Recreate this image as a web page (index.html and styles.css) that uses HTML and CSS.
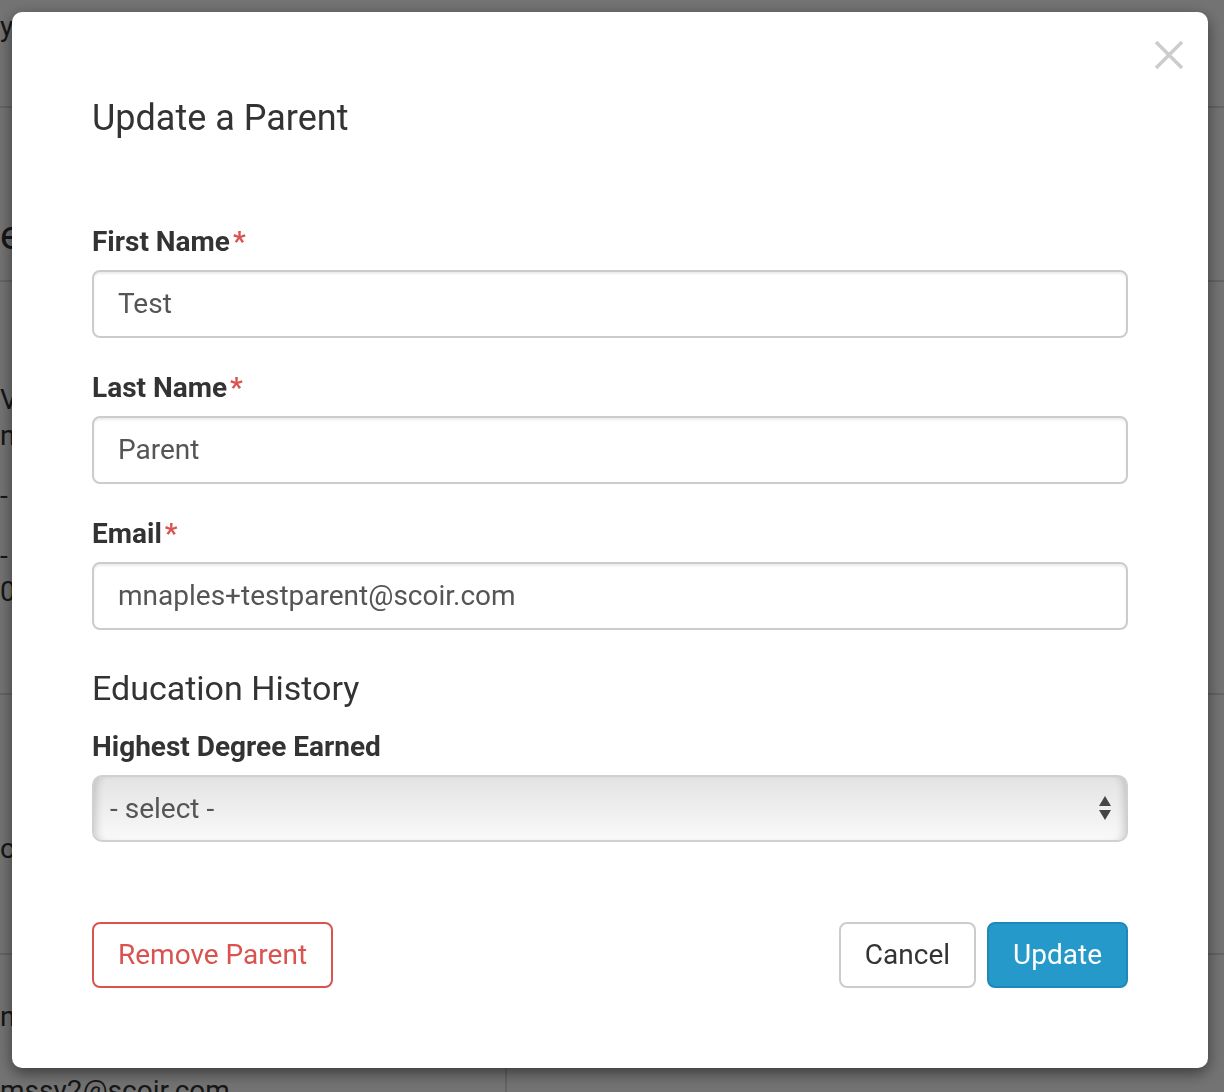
FILE: index.html
```html
<!DOCTYPE html>
<html lang="en">
<head>
    <meta charset="UTF-8">
    <meta name="viewport" content="width=device-width, initial-scale=1.0">
    <title>Update a Parent</title>
    <link rel="stylesheet" href="styles.css">
</head>
<body>
    <!-- page behind the dialog -->
    <div class="page">
        <div class="page-top">y</div>
        <div class="page-title">e</div>
        <div class="page-block">
            <div class="page-line">V</div>
            <div class="page-line">n,</div>
            <div class="page-line gap">-</div>
            <div class="page-line gap">-</div>
            <div class="page-line">0</div>
        </div>
        <div class="page-block tall">
            <div class="page-line">o</div>
        </div>
        <div class="page-block short">
            <div class="page-line">n</div>
        </div>
        <div class="page-row">
            <div class="page-cell">mssy2@scoir.com</div>
        </div>
    </div>

    <div class="backdrop">
        <div class="modal">
            <button class="close" type="button" aria-label="Close">
                <svg width="30" height="30" viewBox="0 0 30 30">
                    <path d="M2 2 L28 28 M28 2 L2 28" stroke="#cccccc" stroke-width="3.5" fill="none"/>
                </svg>
            </button>

            <h4 class="modal-title">Update a Parent</h4>

            <form class="parent-form">
                <div class="form-group">
                    <label>First Name<span class="req">*</span></label>
                    <input class="form-control" type="text" value="Test">
                </div>
                <div class="form-group">
                    <label>Last Name<span class="req">*</span></label>
                    <input class="form-control" type="text" value="Parent">
                </div>
                <div class="form-group">
                    <label>Email<span class="req">*</span></label>
                    <input class="form-control" type="text" value="mnaples+testparent@scoir.com">
                </div>

                <h5 class="section-title">Education History</h5>
                <div class="form-group">
                    <label>Highest Degree Earned</label>
                    <div class="select-box">
                        <span>- select -</span>
                        <svg class="select-arrows" width="14" height="26" viewBox="0 0 14 26">
                            <path d="M7 1 L13 11 L1 11 Z" fill="#454545"/>
                            <path d="M1 15 L13 15 L7 25 Z" fill="#454545"/>
                        </svg>
                    </div>
                </div>

                <div class="modal-footer">
                    <button class="btn btn-danger" type="button">Remove Parent</button>
                    <div class="footer-right">
                        <button class="btn btn-default" type="button">Cancel</button>
                        <button class="btn btn-primary" type="button">Update</button>
                    </div>
                </div>
            </form>
        </div>
    </div>
</body>
</html>
```

FILE: styles.css
```css
* {
    box-sizing: border-box;
}

body {
    margin: 0;
    font-family: Roboto, "Helvetica Neue", Arial, sans-serif;
    color: #333333;
    background-color: #ffffff;
    overflow: hidden;
}

/* background page */
.page {
    height: 1092px;
    overflow: hidden;
    font-size: 28px;
}

.page-top {
    height: 108px;
    padding-top: 10px;
    border-bottom: 2px solid #dddddd;
}

.page-title {
    height: 174px;
    padding-top: 104px;
    font-size: 40px;
    border-bottom: 2px solid #dddddd;
}

.page-block {
    height: 413px;
    padding-top: 100px;
    border-bottom: 2px solid #dddddd;
}

.page-block.tall {
    height: 260px;
    padding-top: 136px;
}

.page-block.short {
    height: 105px;
    padding-top: 44px;
    border-bottom: none;
}

.page-line {
    line-height: 36px;
}

.page-line.gap {
    margin-top: 24px;
}

.page-row {
    display: flex;
}

.page-cell {
    width: 507px;
    height: 40px;
    padding-top: 13px;
    line-height: 36px;
    border-right: 2px solid #dddddd;
}

/* dialog */
.backdrop {
    position: fixed;
    top: 0;
    left: 0;
    right: 0;
    bottom: 0;
    background-color: rgba(0, 0, 0, 0.55);
}

.modal {
    position: relative;
    width: 1196px;
    margin: 12px 0 0 12px;
    padding: 87px 80px 80px;
    background-color: #ffffff;
    border-radius: 10px;
    box-shadow: 0 5px 15px rgba(0, 0, 0, 0.5);
}

.close {
    position: absolute;
    top: 28px;
    right: 24px;
    padding: 0;
    border: none;
    background: none;
    line-height: 0;
    cursor: pointer;
}

.modal-title {
    margin: 0 0 83px;
    font-size: 36px;
    font-weight: 400;
    line-height: 1.1;
}

.form-group {
    margin-bottom: 30px;
}

.form-group label {
    display: block;
    margin-bottom: 8px;
    font-size: 28px;
    font-weight: 700;
    line-height: 40px;
}

.req {
    color: #d9534f;
    margin-left: 3px;
}

.form-control {
    display: block;
    width: 100%;
    height: 68px;
    padding: 0 24px;
    font-family: inherit;
    font-size: 28px;
    color: #555555;
    background-color: #ffffff;
    border: 2px solid #cccccc;
    border-radius: 8px;
    box-shadow: inset 0 2px 2px rgba(0, 0, 0, 0.075);
}

.section-title {
    margin: 40px 0 20px;
    font-size: 34px;
    font-weight: 400;
    line-height: 1.1;
}

.select-box {
    display: flex;
    align-items: center;
    justify-content: space-between;
    height: 67px;
    padding: 0 14px 0 16px;
    font-size: 28px;
    color: #555555;
    border: 2px solid #d0d0d0;
    border-radius: 10px;
    background: linear-gradient(to bottom, #e3e3e3, #f9f9f9);
    box-shadow: inset 8px 0 8px -6px rgba(0, 0, 0, 0.18), inset -8px 0 8px -6px rgba(0, 0, 0, 0.18);
}

.modal-footer {
    display: flex;
    justify-content: space-between;
    margin-top: 80px;
}

.footer-right {
    display: flex;
    gap: 11px;
}

.btn {
    height: 66px;
    padding: 0 24px;
    font-family: inherit;
    font-size: 28px;
    line-height: 1;
    border: 2px solid transparent;
    border-radius: 8px;
    cursor: pointer;
}

.btn-danger {
    color: #d9534f;
    background-color: #ffffff;
    border-color: #d9534f;
}

.btn-default {
    color: #333333;
    background-color: #ffffff;
    border-color: #cccccc;
}

.btn-primary {
    color: #ffffff;
    background-color: #2699cb;
    border-color: #2088b8;
}
```
